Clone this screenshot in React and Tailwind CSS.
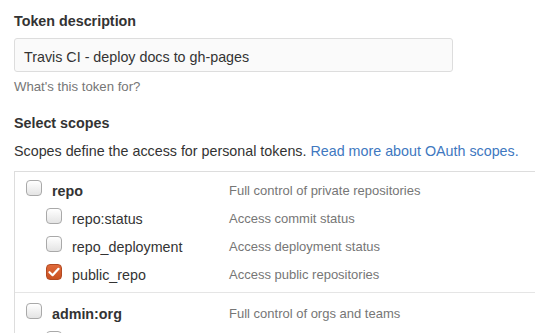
import React from 'react';

const scopes = [
  {
    name: 'repo',
    desc: 'Full control of private repositories',
    children: [
      { name: 'repo:status', desc: 'Access commit status' },
      { name: 'repo_deployment', desc: 'Access deployment status' },
      { name: 'public_repo', desc: 'Access public repositories', checked: true },
    ],
  },
  {
    name: 'admin:org',
    desc: 'Full control of orgs and teams',
    // next row only peeks in at the bottom edge
    children: [{ name: '', desc: '' }],
  },
];

function Checkbox({ checked }) {
  if (checked) {
    return (
      <span className="mt-[3px] flex h-[16px] w-[16px] shrink-0 items-center justify-center rounded-[4px] border border-[#b24a22] bg-gradient-to-b from-[#e06a3a] to-[#c9501f]">
        <svg width="12" height="10" viewBox="0 0 12 10">
          <path d="M1.5 5.2 L4.6 8.2 L10.5 1.8" fill="none" stroke="#fff" strokeWidth="2.2" strokeLinecap="round" strokeLinejoin="round" />
        </svg>
      </span>
    );
  }
  return (
    <span className="mt-[3px] h-[16px] w-[16px] shrink-0 rounded-[4px] border border-[#a9a9a9] bg-gradient-to-b from-white to-[#e4e4e4]" />
  );
}

function Row({ scope, child }) {
  return (
    <div className={`flex h-[28px] items-start ${child ? 'pl-[31px]' : 'pl-[11px]'}`}>
      <Checkbox checked={scope.checked} />
      <span
        className={`leading-[28px] ${child ? 'ml-[10px] w-[157px] text-[#333]' : 'ml-[10px] w-[177px] font-bold text-[#333]'}`}
      >
        {scope.name}
      </span>
      <span className="text-[13px] leading-[28px] text-[#767676]">{scope.desc}</span>
    </div>
  );
}

export default function App() {
  return (
    <div
      className="h-[333px] overflow-hidden bg-white pl-[14px] pt-[11px] text-[14.3px] text-[#333]"
      style={{ fontFamily: '"Liberation Sans", Arial, sans-serif' }}
    >
      {/* Token description */}
      <div className="font-bold leading-[20px]">Token description</div>
      <div className="mt-[7px] flex h-[34px] w-[439px] items-center rounded-[3px] border border-[#ddd] bg-[#fafafa] pl-[9px] pt-[3px] leading-[20px] text-[#333]">
        Travis CI - deploy docs to gh-pages
      </div>
      <div className="mt-[6px] text-[13.2px] leading-[18px] text-[#767676]">What's this token for?</div>

      {/* Scopes */}
      <div className="mt-[17px] font-bold leading-[20px]">Select scopes</div>
      <p className="mt-[8px] leading-[20px]">
        Scopes define the access for personal tokens.{' '}
        <a href="#" className="text-[#4078c0]">
          Read more about OAuth scopes.
        </a>
      </p>

      <div className="mt-[10px] w-[600px] border-l border-t border-[#ddd]">
        {scopes.map((s, i) => (
          <div
            key={s.name}
            className={i === 0 ? 'pb-[3px] pt-[5px]' : 'border-t border-[#e5e5e5] pt-[7px]'}
          >
            <Row scope={s} />
            {s.children.map((c, j) => (
              <Row key={j} scope={c} child />
            ))}
          </div>
        ))}
      </div>
    </div>
  );
}
